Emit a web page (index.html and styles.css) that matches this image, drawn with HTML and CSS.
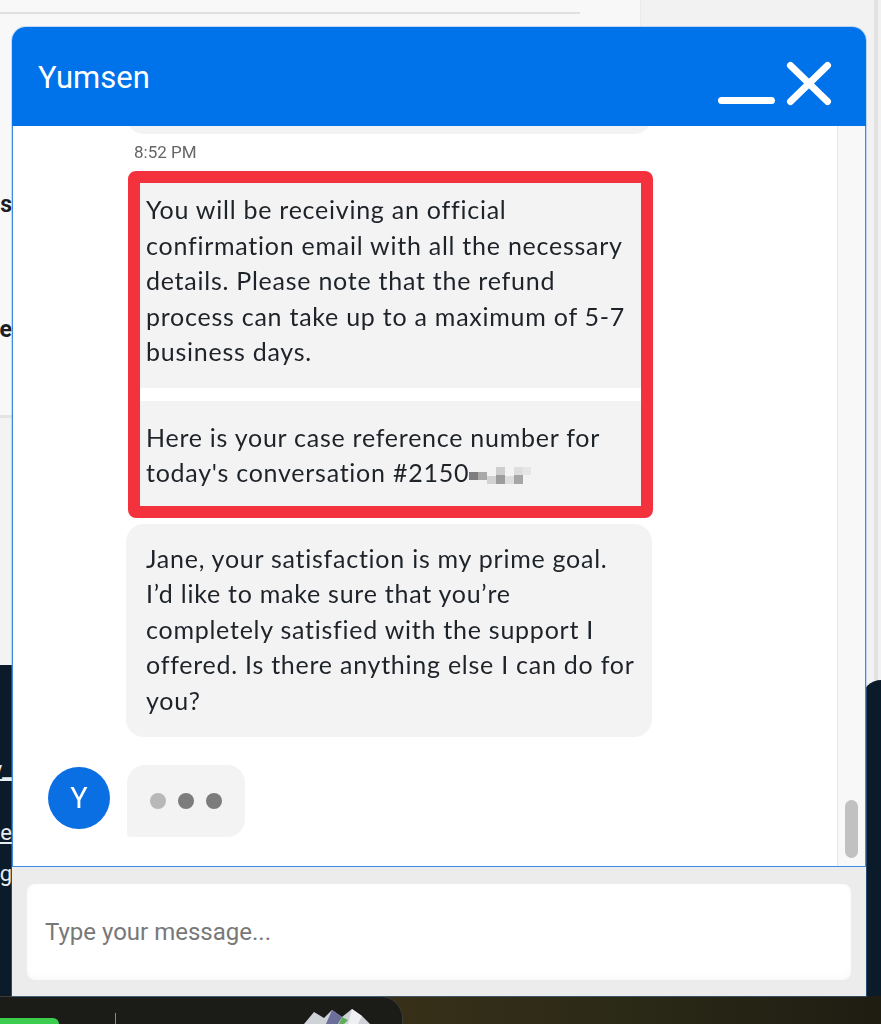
FILE: index.html
```html
<!DOCTYPE html>
<html lang="en">
<head>
  <meta charset="UTF-8" />
  <meta name="viewport" content="width=device-width, initial-scale=1" />
  <title>Yumsen - Support Chat</title>
  <link rel="stylesheet" href="styles.css">
</head>
<body>

<div class="page">
  <div class="left">
    <div class="card">
      <div class="rule"></div>
      <div class="peek peek-bold first-peek"><span>Refunds</span></div>
      <div class="peek peek-bold second-peek"><span>Cancel a purchase</span></div>
    </div>
    <div class="gap"></div>
    <div class="navy">
      <div class="peek peek-link link-a"><span>View privacy_</span></div>
      <div class="peek peek-link link-b"><span>Read the refund guide</span></div>
      <div class="peek peek-link link-c"><span>Learn more about billing</span></div>
    </div>
  </div>
  <div class="right">
    <div class="right-light"></div>
    <div class="right-navy"></div>
  </div>
  <div class="dock">
    <div class="dock-panel">
      <span class="dock-pill"></span>
      <span class="dock-line"></span>
      <svg class="dock-gem" width="76" height="16" viewBox="0 0 76 16">
        <path d="M6 16 L16 4 L26 10 L34 2 L44 9 L54 1 L64 8 L72 16 Z" fill="#cfd3d8"/>
        <path d="M34 2 L44 9 L40 16 L28 16 Z" fill="#6b6f9a"/>
        <path d="M54 1 L64 8 L60 16 L50 16 Z" fill="#eef0f2"/>
        <path d="M44 9 L50 12 L46 16 L41 16 Z" fill="#5fae5a"/>
      </svg>
    </div>
  </div>
</div>

<div class="chat">
  <div class="chat-head">
    <span class="chat-title">Yumsen</span>
    <svg class="chat-tools" width="120" height="50" viewBox="0 0 120 50">
      <rect x="4" y="39" width="57" height="7" rx="3.5" fill="#fff"/>
      <path d="M76.5 7.5 L113.5 43.5 M113.5 7.5 L76.5 43.5" stroke="#fff" stroke-width="7" stroke-linecap="round"/>
    </svg>
  </div>

  <div class="chat-body">
    <div class="msgs">
      <div class="bubble bubble-cut"></div>
      <div class="time">8:52 PM</div>
      <div class="flag">
        <div class="bubble first">You will be receiving an official<br>confirmation email with all the necessary<br>details. Please note that the refund<br>process can take up to a maximum of 5-7<br>business days.</div>
        <div class="bubble second">Here is your case reference number for<br>today's conversation #2150<svg class="redact" width="62" height="17" viewBox="0 0 62 17">
            <rect x="0" y="5" width="9" height="8" fill="#7e7e7e"/>
            <rect x="9" y="5" width="9" height="8" fill="#a9a9a9"/>
            <rect x="18" y="9" width="9" height="8" fill="#d2d2d2"/>
            <rect x="27" y="0" width="9" height="8" fill="#cdcdcd"/>
            <rect x="27" y="8" width="9" height="9" fill="#9c9c9c"/>
            <rect x="36" y="9" width="9" height="8" fill="#dddddd"/>
            <rect x="45" y="0" width="9" height="8" fill="#dedede"/>
            <rect x="45" y="8" width="9" height="9" fill="#a6a6a6"/>
            <rect x="54" y="0" width="8" height="8" fill="#e6e6e6"/>
          </svg></div>
      </div>
      <div class="bubble last">Jane, your satisfaction is my prime goal.<br>I’d like to make sure that you’re<br>completely satisfied with the support I<br>offered. Is there anything else I can do for<br>you?</div>
      <div class="row">
        <div class="avatar">Y</div>
        <div class="bubble typing"><i class="dot dot-light"></i><i class="dot"></i><i class="dot"></i></div>
      </div>
    </div>
    <div class="track"><div class="thumb"></div></div>
  </div>

  <div class="chat-foot">
    <div class="input">Type your message...</div>
  </div>
</div>

</body>
</html>
```

FILE: styles.css
```css
body {
  margin: 0;
  height: 1024px;
  overflow: hidden;
  background-color: #f1f1f1;
  font-family: Roboto, "Liberation Sans", sans-serif;
}

/* page behind the widget */
.page {
  display: grid;
  grid-template-columns: 640px 1fr;
  grid-template-rows: 996px 28px;
}
.left {
  display: flex;
  flex-direction: column;
}
.card {
  height: 415px;
  box-sizing: border-box;
  padding-top: 12px;
  background-color: #f8f8f8;
  box-shadow: 1px 0 3px rgba(0,0,0,0.06);
}
.rule {
  width: 580px;
  height: 2px;
  background-color: #e0e0e0;
}
.peek {
  display: flex;
  justify-content: flex-end;
  width: 12px;
  overflow: hidden;
  white-space: nowrap;
}
.peek-bold {
  font-weight: bold;
  font-size: 23px;
  line-height: 28px;
  color: #1c1f24;
}
.first-peek { margin-top: 177px; }
.second-peek { margin-top: 97px; }
.gap {
  height: 250px;
  background-color: #f3f3f3;
  border-top: 3px solid #e4e4e4;
  box-sizing: border-box;
}
.navy {
  flex: 1;
  background-color: #0c1b29;
  padding-top: 92px;
}
.peek-link {
  color: #e8edf2;
  font-size: 22px;
  line-height: 26px;
  text-decoration: underline;
}
.link-b { margin-top: 37px; }
.link-c { margin-top: 15px; text-decoration: none; }
.right {
  display: flex;
  flex-direction: column;
}
.right-light {
  height: 680px;
  background-color: #f2f2f2;
  border-left: 1px solid #ececec;
  border-right: 4px solid #e2e2e2;
  margin-right: 3px;
}
.right-navy {
  flex: 1;
  margin-left: 222px;
  background-color: #0c1b29;
  border-top-left-radius: 22px;
}
.dock {
  grid-column: 1 / -1;
  display: flex;
  background: linear-gradient(90deg, #2a2414 0%, #3a3018 40%, #2b2a17 70%, #1f1d12 100%);
}
.dock-panel {
  width: 402px;
  background-color: #1b1b18;
  border-top: 1px solid #3b3b36;
  border-right: 1px solid #3b3b36;
  border-top-right-radius: 22px;
  display: flex;
  align-items: flex-end;
}
.dock-pill {
  width: 59px;
  height: 6px;
  background-color: #3ccd4e;
  border-top-right-radius: 6px;
}
.dock-line {
  width: 1px;
  height: 11px;
  margin-left: 56px;
  background-color: #8a8a86;
}
.dock-gem {
  margin-left: 182px;
}

/* chat widget, floats over the page */
.chat {
  position: fixed;
  left: 12px;
  top: 27px;
  width: 854px;
  height: 969px;
  display: flex;
  flex-direction: column;
  border-radius: 14px 14px 0 0;
  overflow: hidden;
  box-shadow: 0 0 0 1px rgba(90,160,240,0.35);
}
.chat-head {
  height: 99px;
  flex-shrink: 0;
  display: flex;
  justify-content: space-between;
  align-items: center;
  padding: 0 32px 0 26px;
  background-color: #0073ea;
}
.chat-title {
  color: white;
  font-size: 31px;
  margin-top: 2px;
}
.chat-tools {
  align-self: flex-end;
  margin-bottom: 18px;
}
.chat-body {
  height: 740px;
  flex-shrink: 0;
  display: flex;
  background-color: white;
  border: 1px solid #3f8de3;
  border-top: 0;
}
.msgs {
  flex: 1;
  overflow: hidden;
}
.track {
  width: 28px;
  box-sizing: border-box;
  display: flex;
  flex-direction: column;
  justify-content: flex-end;
  align-items: center;
  padding-bottom: 8px;
  background-color: #f8f8f8;
  border-left: 1px solid #e6e6e6;
}
.thumb {
  width: 13px;
  height: 58px;
  border-radius: 7px;
  background-color: #c1c1c1;
}

.bubble {
  box-sizing: border-box;
  width: 526px;
  margin-left: 113px;
  padding: 17px 8px 19px 20px;
  border-radius: 18px;
  background-color: #f3f3f3;
  color: #1e2329;
  font-family: Lato, "Open Sans", sans-serif;
  font-size: 25px;
  line-height: 35.5px;
  letter-spacing: 0.75px;
  white-space: nowrap;
}
.bubble-cut {
  height: 40px;
  margin-top: -32px;
  padding: 0;
}
.time {
  margin: 8px 0 0 121px;
  font-size: 17px;
  line-height: 20px;
  color: #666;
}
.flag {
  box-sizing: border-box;
  width: 525px;
  margin: 9px 0 0 115px;
  display: flex;
  flex-direction: column;
  gap: 13px;
  background-color: white;
  border: 12px solid #f4323e;
  border-radius: 8px;
}
.flag .bubble {
  width: auto;
  margin: 0;
  border-radius: 0;
  padding-left: 6px;
  padding-right: 4px;
}
.flag .first {
  padding-top: 9px;
  padding-bottom: 18px;
}
.flag .second {
  padding-top: 19px;
  padding-bottom: 15px;
}
.redact {
  vertical-align: -2px;
}
.last {
  margin-top: 6px;
}
.row {
  margin-top: 28px;
  padding-left: 35px;
  display: flex;
  align-items: flex-start;
}
.avatar {
  width: 62px;
  height: 62px;
  margin-top: 2px;
  margin-right: 17px;
  border-radius: 50%;
  background-color: #0a6fe3;
  color: white;
  font-size: 29px;
  display: flex;
  align-items: center;
  justify-content: center;
}
.typing {
  width: 118px;
  height: 72px;
  margin: 0;
  padding: 0 0 0 23px;
  border-radius: 18px 18px 18px 4px;
  display: flex;
  align-items: center;
  gap: 12px;
}
.dot {
  width: 16px;
  height: 16px;
  border-radius: 50%;
  background-color: #7c7c7c;
}
.dot-light {
  background-color: #b8b8b8;
}

.chat-foot {
  flex: 1;
  padding: 17px 15px 16px;
  background-color: #ececec;
}
.input {
  height: 96px;
  box-sizing: border-box;
  display: flex;
  align-items: center;
  padding-left: 18px;
  border-radius: 8px;
  background-color: white;
  box-shadow: inset 0 -2px 6px rgba(0,0,0,0.03);
  color: #787878;
  font-size: 24px;
}
```
